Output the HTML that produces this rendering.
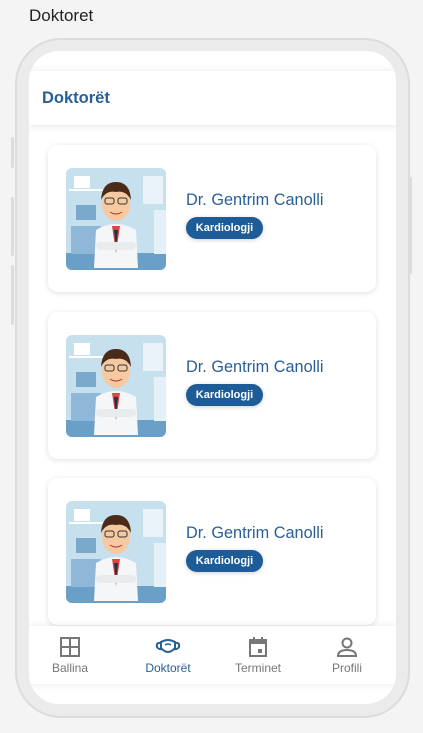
<!DOCTYPE html><html><head><style>
*{margin:0;padding:0;box-sizing:border-box}
body{width:423px;height:733px;background:#f4f4f4;position:relative;overflow:hidden;font-family:"Liberation Sans",sans-serif}
.t{position:absolute;left:29px;top:6px;font-size:17px;color:#222}
.frame{position:absolute;left:15px;top:38px;width:395px;height:680px;background:#ebebeb;border:2px solid #dcdcdc;border-radius:46px}
.screen{position:absolute;left:29px;top:51px;width:367px;height:653px;background:#fff;border-radius:30px;overflow:hidden}
.btn{position:absolute;background:#dcdcdc;width:3px;border-radius:2px}
.hdr{position:absolute;left:0;top:20px;width:367px;height:54px;background:#fff;box-shadow:0 3px 6px rgba(0,0,0,.07),0 -3px 6px rgba(0,0,0,.04)}
.hdr span{position:absolute;left:13px;top:18px;font-size:16.5px;font-weight:bold;color:#2a5f96}
.card{position:absolute;left:19px;width:328px;height:147px;background:#fff;border-radius:10px;box-shadow:0 1px 6px rgba(0,0,0,.13)}
.img{position:absolute;left:18px;top:23px;width:100px;height:102px;border-radius:6px;overflow:hidden}
.nm{position:absolute;left:138px;top:46px;font-size:16.3px;color:#2a5f96}
.bd{position:absolute;left:138px;top:72px;width:77px;height:22px;border-radius:11px;background:#1d5c96;color:#fff;font-size:11px;font-weight:bold;text-align:center;line-height:22px;box-shadow:0 1px 4px rgba(0,0,0,.2)}
.nav{position:absolute;left:0;top:575px;width:367px;height:58px;background:#fff;box-shadow:0 -2px 6px rgba(0,0,0,.05),0 2px 6px rgba(0,0,0,.05)}
.ni{position:absolute;top:10px;width:80px;text-align:center;font-size:12px;color:#777}
.ni svg{display:block;margin:0 auto 3px}
</style></head><body>
<div class="t">Doktoret</div>
<div class="btn" style="left:11px;top:137px;height:31px"></div>
<div class="btn" style="left:11px;top:197px;height:59px"></div>
<div class="btn" style="left:11px;top:265px;height:60px"></div>
<div class="btn" style="left:409px;top:177px;height:97px"></div>
<div class="frame"></div>
<div class="screen">
<div class="hdr"><span>Doktorët</span></div>
<div class="card" style="top:94px"><div class="img"><svg width="100" height="102" viewBox="0 0 100 102"><rect width="100" height="102" fill="#c6e0ee"/><rect x="0" y="85" width="100" height="17" fill="#6a9fc8"/><rect x="8" y="8" width="16" height="12" fill="#fff"/><rect x="3" y="21" width="35" height="2" fill="#fff"/><rect x="10" y="37" width="20" height="15" fill="#7aa9cc"/><rect x="5" y="58" width="30" height="28" fill="#8fb8d8"/><rect x="77" y="8" width="20" height="28" fill="#e8f2f8"/><rect x="88" y="42" width="12" height="44" fill="#e5f1f8"/><path d="M28 100 L30 62 Q50 50 70 62 L72 100Z" fill="#f4f6f8"/><path d="M46 58 L50 85 L54 58Z" fill="#d44"/><path d="M48 62 L50 80 L52 62Z" fill="#234"/><ellipse cx="50" cy="36" rx="14" ry="17" fill="#f6c9a0"/><path d="M35 32 Q36 14 50 14 Q64 14 65 32 Q60 22 50 24 Q40 22 35 32Z" fill="#4a2a18"/><rect x="39" y="30" width="9" height="6" rx="2" fill="none" stroke="#333"/><rect x="52" y="30" width="9" height="6" rx="2" fill="none" stroke="#333"/><path d="M44 44 Q50 48 56 44" stroke="#a33" fill="none"/><rect x="30" y="74" width="40" height="8" rx="4" fill="#e8ecef"/></svg></div><div class="nm">Dr. Gentrim Canolli</div><div class="bd">Kardiologji</div></div>
<div class="card" style="top:261px"><div class="img"><svg width="100" height="102" viewBox="0 0 100 102"><rect width="100" height="102" fill="#c6e0ee"/><rect x="0" y="85" width="100" height="17" fill="#6a9fc8"/><rect x="8" y="8" width="16" height="12" fill="#fff"/><rect x="3" y="21" width="35" height="2" fill="#fff"/><rect x="10" y="37" width="20" height="15" fill="#7aa9cc"/><rect x="5" y="58" width="30" height="28" fill="#8fb8d8"/><rect x="77" y="8" width="20" height="28" fill="#e8f2f8"/><rect x="88" y="42" width="12" height="44" fill="#e5f1f8"/><path d="M28 100 L30 62 Q50 50 70 62 L72 100Z" fill="#f4f6f8"/><path d="M46 58 L50 85 L54 58Z" fill="#d44"/><path d="M48 62 L50 80 L52 62Z" fill="#234"/><ellipse cx="50" cy="36" rx="14" ry="17" fill="#f6c9a0"/><path d="M35 32 Q36 14 50 14 Q64 14 65 32 Q60 22 50 24 Q40 22 35 32Z" fill="#4a2a18"/><rect x="39" y="30" width="9" height="6" rx="2" fill="none" stroke="#333"/><rect x="52" y="30" width="9" height="6" rx="2" fill="none" stroke="#333"/><path d="M44 44 Q50 48 56 44" stroke="#a33" fill="none"/><rect x="30" y="74" width="40" height="8" rx="4" fill="#e8ecef"/></svg></div><div class="nm">Dr. Gentrim Canolli</div><div class="bd">Kardiologji</div></div>
<div class="card" style="top:427px"><div class="img"><svg width="100" height="102" viewBox="0 0 100 102"><rect width="100" height="102" fill="#c6e0ee"/><rect x="0" y="85" width="100" height="17" fill="#6a9fc8"/><rect x="8" y="8" width="16" height="12" fill="#fff"/><rect x="3" y="21" width="35" height="2" fill="#fff"/><rect x="10" y="37" width="20" height="15" fill="#7aa9cc"/><rect x="5" y="58" width="30" height="28" fill="#8fb8d8"/><rect x="77" y="8" width="20" height="28" fill="#e8f2f8"/><rect x="88" y="42" width="12" height="44" fill="#e5f1f8"/><path d="M28 100 L30 62 Q50 50 70 62 L72 100Z" fill="#f4f6f8"/><path d="M46 58 L50 85 L54 58Z" fill="#d44"/><path d="M48 62 L50 80 L52 62Z" fill="#234"/><ellipse cx="50" cy="36" rx="14" ry="17" fill="#f6c9a0"/><path d="M35 32 Q36 14 50 14 Q64 14 65 32 Q60 22 50 24 Q40 22 35 32Z" fill="#4a2a18"/><rect x="39" y="30" width="9" height="6" rx="2" fill="none" stroke="#333"/><rect x="52" y="30" width="9" height="6" rx="2" fill="none" stroke="#333"/><path d="M44 44 Q50 48 56 44" stroke="#a33" fill="none"/><rect x="30" y="74" width="40" height="8" rx="4" fill="#e8ecef"/></svg></div><div class="nm">Dr. Gentrim Canolli</div><div class="bd">Kardiologji</div></div>
<div class="nav">
<div class="ni" style="left:1px"><svg width="22" height="22" viewBox="0 0 22 22"><rect x="2" y="2" width="18" height="18" fill="none" stroke="#777" stroke-width="2"/><path d="M11 2V20M2 11H20" stroke="#777" stroke-width="2"/></svg>Ballina</div>
<div class="ni" style="left:99px;color:#2a5f96"><svg width="26" height="22" viewBox="0 0 26 22"><path d="M6 6 Q13 2 20 6 L20 12 Q13 20 6 12Z" fill="none" stroke="#2a5f96" stroke-width="2"/><path d="M6 7 Q1 6 2 11 Q4 14 7 13M20 7 Q25 6 24 11 Q22 14 19 13" fill="none" stroke="#2a5f96" stroke-width="2"/><path d="M10 9 Q13 7 16 9" fill="none" stroke="#2a5f96" stroke-width="1.5"/></svg>Doktorët</div>
<div class="ni" style="left:189px"><svg width="22" height="22" viewBox="0 0 22 22"><rect x="3" y="4" width="16" height="16" fill="none" stroke="#777" stroke-width="2"/><rect x="3" y="4" width="16" height="4" fill="#777"/><path d="M7 1V5M15 1V5" stroke="#777" stroke-width="2"/><rect x="11" y="13" width="4" height="4" fill="#777"/></svg>Terminet</div>
<div class="ni" style="left:278px"><svg width="22" height="22" viewBox="0 0 22 22"><circle cx="11" cy="7" r="4.5" fill="none" stroke="#777" stroke-width="2"/><path d="M2 20 Q2 14 11 14 Q20 14 20 20Z" fill="none" stroke="#777" stroke-width="2"/></svg>Profili</div>
</div>
</div>
</body></html>
